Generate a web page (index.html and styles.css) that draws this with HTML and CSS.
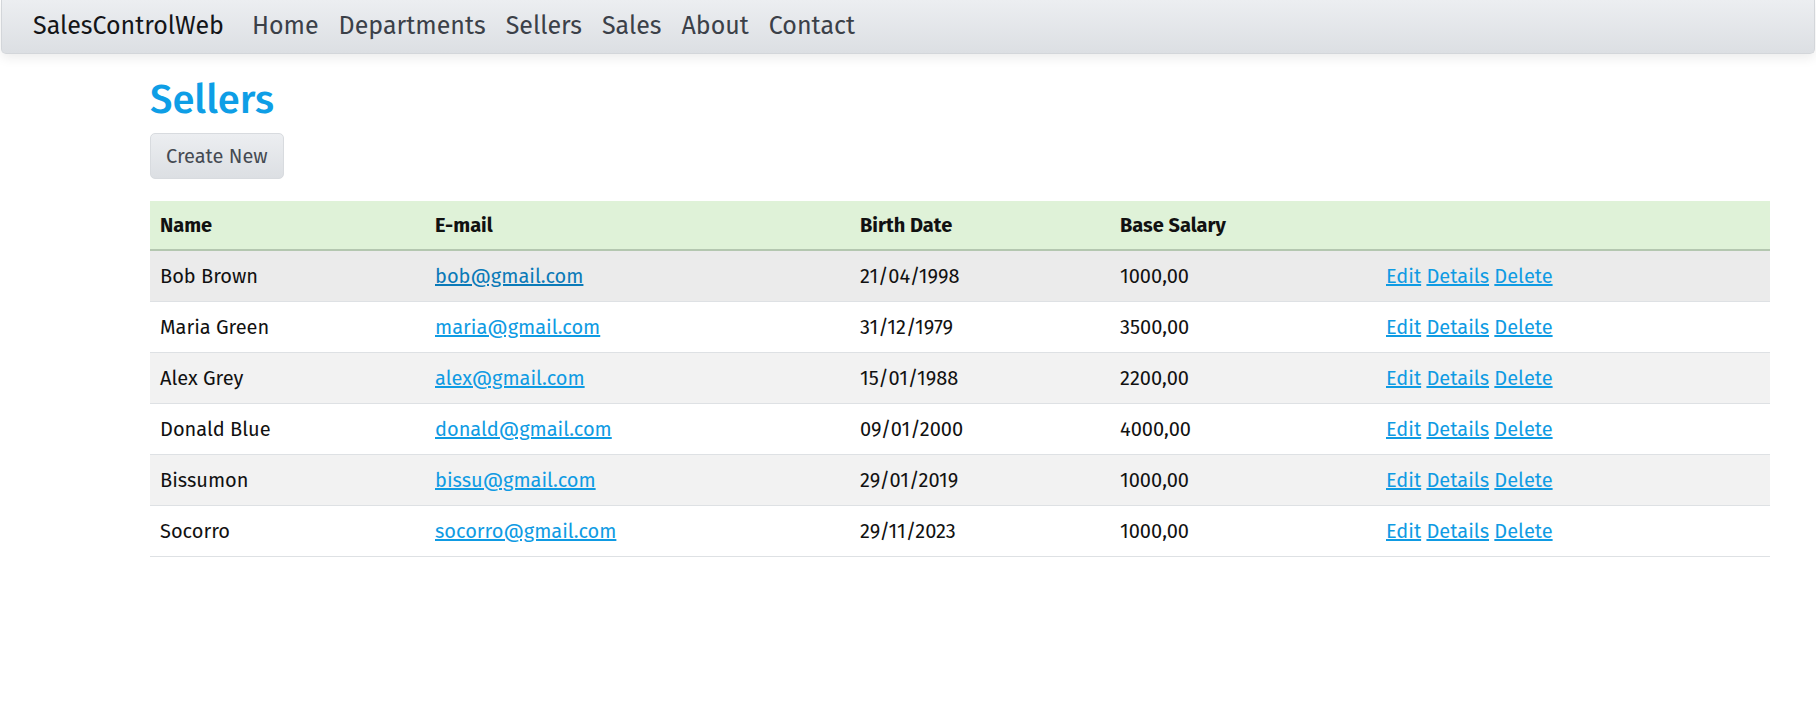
FILE: index.html
```html
<!DOCTYPE html>
<html lang="en">
<head>
<meta charset="utf-8">
<title>Sellers - SalesControlWeb</title>
<link rel="stylesheet" href="styles.css">
</head>
<body>
<nav class="navbar">
  <a class="brand" href="#">SalesControlWeb</a>
  <ul class="nav">
    <li><a href="#">Home</a></li>
    <li><a href="#">Departments</a></li>
    <li><a href="#">Sellers</a></li>
    <li><a href="#">Sales</a></li>
    <li><a href="#">About</a></li>
    <li><a href="#">Contact</a></li>
  </ul>
</nav>
<main class="container">
  <h1 class="title">Sellers</h1>
  <a class="btn" href="#">Create New</a>
  <table class="table">
    <colgroup>
      <col class="c-name"><col class="c-mail"><col class="c-date"><col class="c-sal"><col class="c-act">
    </colgroup>
    <thead>
      <tr><th>Name</th><th>E-mail</th><th>Birth Date</th><th>Base Salary</th><th></th></tr>
    </thead>
    <tbody>
      <tr class="hover"><td>Bob Brown</td><td><a class="mail visited" href="#">bob@gmail.com</a></td><td>21/04/1998</td><td>1000,00</td><td class="actions"><a href="#">Edit</a> <a href="#">Details</a> <a href="#">Delete</a></td></tr>
      <tr><td>Maria Green</td><td><a class="mail" href="#">maria@gmail.com</a></td><td>31/12/1979</td><td>3500,00</td><td class="actions"><a href="#">Edit</a> <a href="#">Details</a> <a href="#">Delete</a></td></tr>
      <tr><td>Alex Grey</td><td><a class="mail" href="#">alex@gmail.com</a></td><td>15/01/1988</td><td>2200,00</td><td class="actions"><a href="#">Edit</a> <a href="#">Details</a> <a href="#">Delete</a></td></tr>
      <tr><td>Donald Blue</td><td><a class="mail" href="#">donald@gmail.com</a></td><td>09/01/2000</td><td>4000,00</td><td class="actions"><a href="#">Edit</a> <a href="#">Details</a> <a href="#">Delete</a></td></tr>
      <tr><td>Bissumon</td><td><a class="mail" href="#">bissu@gmail.com</a></td><td>29/01/2019</td><td>1000,00</td><td class="actions"><a href="#">Edit</a> <a href="#">Details</a> <a href="#">Delete</a></td></tr>
      <tr><td>Socorro</td><td><a class="mail" href="#">socorro@gmail.com</a></td><td>29/11/2023</td><td>1000,00</td><td class="actions"><a href="#">Edit</a> <a href="#">Details</a> <a href="#">Delete</a></td></tr>
    </tbody>
  </table>
</main>
</body>
</html>
```

FILE: styles.css
```css
* { box-sizing: border-box; }
html, body { margin: 0; padding: 0; background: #fff; }
body {
  font-family: "Fira Sans", "Roboto", "Lato", sans-serif;
  font-size: 20px;
  color: #111;
}
.navbar {
  display: flex;
  align-items: center;
  height: 54px;
  padding: 0 0 0 31px;
  background: linear-gradient(#eceef1, #dcdfe3);
  border: 1px solid #d3d6da;
  border-top: none;
  border-radius: 0 0 5px 5px;
  box-shadow: 0 4px 12px rgba(0, 0, 0, 0.08);
  margin: 0 1px;
}
.brand {
  font-size: 25px;
  color: #141518;
  text-decoration: none;
  margin-right: 18px;
  line-height: 1;
}
.nav {
  display: flex;
  list-style: none;
  margin: 0;
  padding: 0;
}
.nav a {
  display: block;
  padding: 0 10px;
  font-size: 25px;
  color: #3b4048;
  text-decoration: none;
  line-height: 1;
}
.container {
  margin-left: 150px;
  width: 1620px;
  padding-top: 22px;
}
.title {
  margin: 0;
  font-size: 40px;
  font-weight: 500;
  line-height: 48px;
  color: #0e9ee6;
}
.btn {
  display: inline-block;
  margin-top: 9px;
  height: 46px;
  line-height: 44px;
  padding: 0 15px;
  font-size: 20px;
  color: #454a52;
  text-decoration: none;
  background: linear-gradient(#eceef1, #dcdfe3);
  border: 1px solid #d8dbdf;
  border-radius: 5px;
}
.table {
  margin-top: 22px;
  width: 1620px;
  border-collapse: collapse;
  table-layout: fixed;
}
.c-name { width: 275px; }
.c-mail { width: 425px; }
.c-date { width: 260px; }
.c-sal { width: 266px; }
.c-act { width: 394px; }
.table th, .table td {
  text-align: left;
  padding: 10px 10px;
  line-height: 30px;
  white-space: nowrap;
}
.table th {
  font-weight: 700;
  background: #dff2d8;
  border-bottom: 2px solid #b4c7b0;
  padding-top: 9px;
  padding-bottom: 9px;
}
.table td { border-bottom: 1px solid #dee1e4; }
.table tbody tr:nth-child(odd) td { background: #f2f2f2; }
.table tbody tr.hover td { background: #ebebeb; }
.table a {
  color: #0f9be3;
  text-decoration: underline;
}
.table a.visited { color: #0a7ab8; }
```
